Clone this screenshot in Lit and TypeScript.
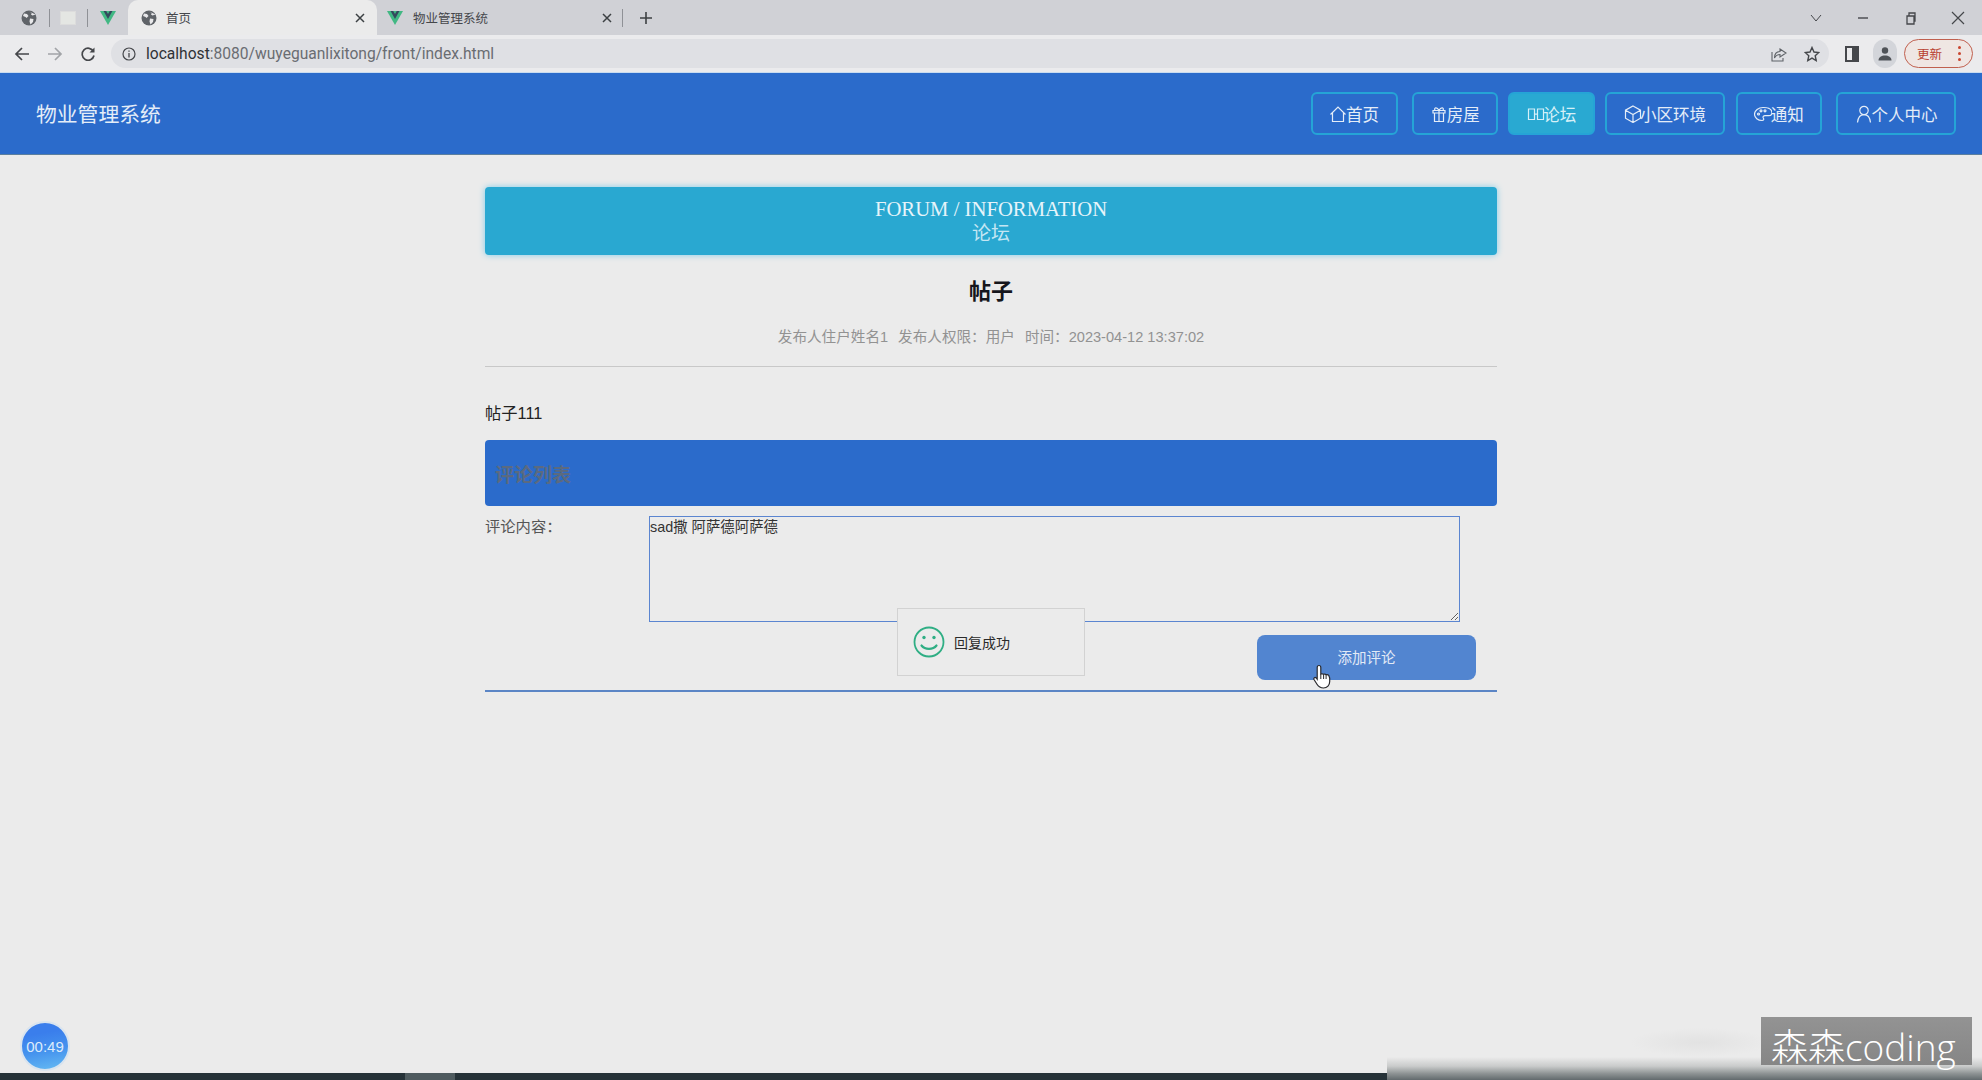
import { LitElement, html, css, svg } from 'lit';
import { customElement } from 'lit/decorators.js';

const globe = html`<svg class="ic16" viewBox="0 0 16 16"><circle cx="8" cy="8" r="7.5" fill="#5f6368"/><path d="M3 3.5l3 .5 1.5 2-2 2-1-1-2.5-1zM8 1.5l3 1-1 2 1.5 1 3-1M9 8.5l3.5.5-.5 3-2.5 2.5-1-3z" fill="#e8e8ea"/></svg>`;
const vue = html`<svg class="ic16" viewBox="0 0 18 16"><path d="M0 0h18L9 16z" fill="#41b883"/><path d="M4 0h3l2 3.5L11 0h3L9 9z" fill="#35495e"/></svg>`;
const close = html`<svg class="ic10" viewBox="0 0 10 10"><path d="M1 1l8 8M9 1l-8 8" stroke="#3c4043" stroke-width="1.5" fill="none"/></svg>`;

const navIcons = {
  home: svg`<path d="M1.500 9.500L9 2l7.500 7.500M3.500 8v8.500h11V8" />`,
  gift: svg`<path d="M4.500 8h9v8.500h-9zM3 5.500h12V8H3zM9 5.500v11M9 5.500C7 1.500 3.500 2.500 5 5.500M9 5.500c2-4 5.500-3 4 0" />`,
  chat: svg`<path d="M1.500 4h6v10.500h-6zM10.500 4h6v10.500h-6zM7.500 9.200h3" />`,
  cube: svg`<path d="M9 1l7.500 4.200v8L9 17.500l-7.500-4.300v-8zM1.500 5.200L9 9.500l7.500-4.300M9 9.500v8" />`,
  palette: svg`<path d="M9 2.500C4.500 2.500.5 5.500.5 9.200s3.500 6.300 7.500 6.300c2 0 2-1.500 1.300-2.500-.7-1.200.2-2.300 1.700-2.300h3.500c2 0 3.500-1 3.500-2.700 0-3.500-3.500-5.500-8.500-5.500z" /><circle cx="4.500" cy="9" r="1" /><circle cx="7" cy="5.800" r="1" /><circle cx="11" cy="5.800" r="1" />`,
  user: svg`<circle cx="9" cy="5.500" r="4.200" /><path d="M2.500 17.500C3 13 5.500 9.700 9 9.700s6 3.300 6.500 7.800" />`,
};

const navItems: { label: string; icon: keyof typeof navIcons; active?: boolean }[] = [
  { label: '首页', icon: 'home' },
  { label: '房屋', icon: 'gift' },
  { label: '论坛', icon: 'chat', active: true },
  { label: '小区环境', icon: 'cube' },
  { label: '通知', icon: 'palette' },
  { label: '个人中心', icon: 'user' },
];

@customElement('app-root')
export class AppRoot extends LitElement {
  static styles = css`
    :host {
      display: block;
      font-family: "Liberation Sans", "Noto Sans CJK SC", sans-serif;
    }
    .page {
      position: relative;
      width: 1982px;
      height: 1080px;
      overflow: hidden;
      background: #ebebeb;
      display: flex;
      flex-direction: column;
    }
    svg { display: block; flex: none; }
    .ic16 { width: 16px; height: 16px; }
    .ic10 { width: 10px; height: 10px; }

    /* browser frame */
    .tabstrip {
      height: 35px;
      background: #d0d1d6;
      display: flex;
      align-items: stretch;
      flex: none;
    }
    .pinned {
      width: 128px;
      display: flex;
      align-items: center;
      padding-left: 21px;
      box-sizing: border-box;
    }
    .sep { width: 1px; height: 18px; background: #8f9196; flex: none; align-self: center; }
    .pinned .sep.a { margin: 0 10px 0 12px; }
    .pinned .sep.b { margin: 0 12px 0 11px; }
    .fav { width: 16px; height: 14px; background: #e4e6e3; border: 1px solid #dcdcdc; box-sizing: border-box; }
    .tab {
      width: 249px;
      display: flex;
      align-items: center;
      box-sizing: border-box;
      font-size: 12.500px;
      color: #45474b;
    }
    .tab.active {
      background: #ebebeb;
      border-radius: 10px 10px 0 0;
      padding: 0 12px 0 13px;
      gap: 9px;
    }
    .tab.next { padding: 0 10px 0 10px; gap: 10px; width: 245px; }
    .tab span { flex: 1; }
    .plus { margin-left: 16px; align-self: center; width: 14px; height: 14px; }
    .winctl {
      margin-left: auto;
      display: flex;
      align-items: center;
      padding-right: 17px;
    }
    .winctl svg { width: 14px; height: 14px; margin-left: 33px; }
    .winctl svg:nth-child(3) { margin-left: 34px; }

    .toolbar {
      height: 37px;
      background: #ebebed;
      border-bottom: 1px solid #c9dcf0;
      display: flex;
      align-items: center;
      padding: 0 9px 0 14px;
      flex: none;
    }
    .toolbar .nav { width: 16px; height: 16px; margin-right: 17px; }
    .omnibox {
      margin-left: -2px;
      width: 1719px;
      height: 29px;
      border-radius: 15px;
      background: #dfe0e4;
      display: flex;
      align-items: center;
      padding: 0 9px 0 11px;
      box-sizing: border-box;
      font-family: "Roboto", sans-serif;
      font-size: 15.600px;
      color: #6a6d72;
    }
    .omnibox .info { width: 14px; height: 14px; margin-right: 10px; }
    .omnibox b { font-weight: 400; color: #2f3236; }
    .omni-right { margin-left: auto; display: flex; gap: 17px; align-items: center; }
    .panel { width: 14px; height: 16px; margin-left: 16px; }
    .avatar {
      width: 24px;
      height: 29px;
      margin-left: 14px;
      border-radius: 12px;
      background: #d3d5da;
      display: flex;
      align-items: center;
      justify-content: center;
    }
    .update {
      margin-left: 7px;
      width: 69px;
      height: 29px;
      box-sizing: border-box;
      border: 1px solid #c0604f;
      border-radius: 15px;
      display: flex;
      align-items: center;
      justify-content: space-between;
      padding: 0 11px 0 12px;
      color: #b8402f;
      font-size: 12.500px;
      background: #efe6e3;
    }
    .dots { display: flex; flex-direction: column; gap: 3px; }
    .dots i { width: 3px; height: 3px; border-radius: 50%; background: #c9452f; }

    /* site nav */
    .site-nav {
      height: 82px;
      flex: none;
      background: #2b6bcb;
      border-bottom: 1px solid #5b7f9e;
      box-sizing: border-box;
      display: flex;
      align-items: center;
      padding: 0 26px 0 36px;
      color: #e4edf8;
    }
    .brand { font-size: 20.800px; padding-bottom: 2px; }
    .menu { margin-left: auto; display: flex; align-items: center; }
    .menu-item {
      height: 43px;
      box-sizing: border-box;
      border: 2px solid #25a4d6;
      border-radius: 6px;
      padding: 0 16.600px;
      display: flex;
      align-items: center;
      font-size: 16.500px;
      color: #e4edf8;
    }
    .menu-item svg {
      width: 18px;
      height: 18px;
      fill: none;
      stroke: currentColor;
      stroke-width: 1.200;
      margin-right: -1.500px;
    }
    .menu-item.active { background: #29a9d2; color: #d5f0f8; }
    .menu-item:nth-child(2) { margin-left: 14px; }
    .menu-item:nth-child(3),
    .menu-item:nth-child(4) { margin-left: 10px; }
    .menu-item:nth-child(5) { margin-left: 11px; }
    .menu-item:nth-child(6) { margin-left: 14px; }

    /* content */
    .main { width: 1012px; margin: 0 auto; padding-top: 32px; }
    .banner {
      height: 68px;
      box-sizing: border-box;
      padding-top: 10px;
      border-radius: 4px;
      background: #29a8d1;
      box-shadow: 0 0 6px #7fcbe8;
      text-align: center;
      color: #e6f4fa;
      font-family: "Liberation Serif", "Noto Sans CJK SC", serif;
      font-size: 20.700px;
      line-height: 24px;
    }
    .banner .cn {
      color: #c4e6f3;
      font-family: "Noto Sans CJK SC", sans-serif;
      font-size: 19px;
      line-height: 21px;
    }
    .title {
      margin: 22px 0 0;
      height: 30px;
      line-height: 30px;
      font-size: 22px;
      font-weight: 700;
      text-align: center;
      color: #16161c;
    }
    .meta {
      margin-top: 20px;
      height: 20px;
      line-height: 20px;
      text-align: center;
      font-size: 14.600px;
      color: #929292;
      padding-bottom: 19px;
      border-bottom: 1px solid #c8c8c8;
    }
    .meta span + span { margin-left: 10px; }
    .body {
      margin-top: 34px;
      height: 24px;
      line-height: 24px;
      font-size: 16.300px;
      color: #222;
    }
    .bar {
      margin-top: 15px;
      height: 66px;
      border-radius: 4px;
      background: #2b6bcb;
      display: flex;
      align-items: center;
      padding-left: 10px;
      font-size: 19px;
      font-weight: 700;
      color: #5b6a80;
    }
    .form-row {
      margin-top: 10px;
      display: flex;
      align-items: flex-start;
    }
    .form-row label {
      width: 164px;
      flex: none;
      font-size: 15.300px;
      line-height: 21px;
      color: #555;
    }
    textarea {
      display: block;
      width: 811px;
      height: 106px;
      box-sizing: border-box;
      margin: 0;
      padding: 0;
      border: 1.500px solid #5b85d0;
      background: transparent;
      outline: none;
      font-family: inherit;
      font-size: 14.400px;
      line-height: 20px;
      color: #333;
    }
    .actions {
      margin-top: 13px;
      display: flex;
      justify-content: flex-end;
      padding: 0 21px 10px 0;
      border-bottom: 2px solid #5b85c5;
    }
    .add {
      width: 219px;
      height: 45px;
      border: 0;
      border-radius: 8px;
      background: #5285d0;
      color: #e2eaf6;
      font-family: inherit;
      font-size: 14.500px;
      padding: 0 0 2px;
    }

    /* overlays */
    .toast {
      position: absolute;
      left: 897px;
      top: 608px;
      width: 188px;
      height: 68px;
      box-sizing: border-box;
      border: 1px solid #d2d2d2;
      background: #ebebeb;
      display: flex;
      align-items: center;
      padding-left: 15px;
      gap: 9px;
      font-size: 14px;
      color: #2a2a2a;
    }
    .toast svg { width: 32px; height: 32px; }
    .cursor { position: absolute; left: 1313px; top: 664px; width: 19px; height: 25px; }
    .timer {
      position: absolute;
      left: 20px;
      top: 1021px;
      width: 50px;
      height: 50px;
      box-sizing: border-box;
      border: 2px solid #d9e4ef;
      border-radius: 50%;
      background: linear-gradient(170deg, #3a7eec 25%, #4593ee 60%, #62b6f2 95%);
      display: flex;
      align-items: center;
      justify-content: center;
      font-size: 15px;
      color: #dcebfb;
    }
    .strip {
      position: absolute;
      left: 0;
      bottom: 0;
      width: 1387px;
      height: 7px;
      background: #263238;
    }
    .strip i { position: absolute; left: 405px; top: 0; width: 50px; height: 7px; background: #4f5b5f; }
    .smudge {
      position: absolute;
      left: 1630px;
      top: 1028px;
      width: 140px;
      height: 29px;
      background: radial-gradient(closest-side, #e2e2e2, #ebebeb);
    }
    .fade {
      position: absolute;
      left: 1387px;
      right: 0;
      bottom: 0;
      height: 23px;
      background: linear-gradient(#ebebeb, #c9cbcb 40%, #8e9394 72%, #626a6d);
    }
    .watermark {
      position: absolute;
      left: 1761px;
      top: 1017px;
      width: 211px;
      height: 48px;
      background: linear-gradient(#939393, #868686);
      color: #fff;
      font-family: "Open Sans", "Noto Sans CJK SC", sans-serif;
      font-weight: 300;
      font-size: 37px;
      line-height: 48px;
      padding: 6px 0 0 10px;
      box-sizing: border-box;
      white-space: nowrap;
    }
  `;

  render() {
    return html`
      <div class="page">
        <div class="tabstrip">
          <div class="pinned">
            ${globe}<div class="sep a"></div><div class="fav"></div><div class="sep b"></div>${vue}
          </div>
          <div class="tab active">${globe}<span>首页</span>${close}</div>
          <div class="tab next">${vue}<span>物业管理系统</span>${close}</div>
          <div class="sep"></div>
          <svg class="plus" viewBox="0 0 14 14"><path d="M7 1v12M1 7h12" stroke="#3c4043" stroke-width="1.600" fill="none"/></svg>
          <div class="winctl">
            <svg viewBox="0 0 14 14"><path d="M2 4l5 6 5-6" stroke="#45474b" stroke-width="1" fill="none"/></svg>
            <svg viewBox="0 0 14 14"><path d="M2 7h10" stroke="#45474b" stroke-width="1.400" fill="none"/></svg>
            <svg viewBox="0 0 14 14"><path d="M3 5h7v8H3zM5 5V2h6v8h-1" stroke="#45474b" stroke-width="1.300" fill="none"/></svg>
            <svg viewBox="0 0 14 14"><path d="M1 1l12 12M13 1L1 13" stroke="#45474b" stroke-width="1.200" fill="none"/></svg>
          </div>
        </div>

        <div class="toolbar">
          <svg class="nav" viewBox="0 0 16 16"><path d="M15 8H2M8 2L2 8l6 6" stroke="#45474b" stroke-width="1.700" fill="none"/></svg>
          <svg class="nav" viewBox="0 0 16 16"><path d="M1 8h13M8 2l6 6-6 6" stroke="#a2a4a8" stroke-width="1.700" fill="none"/></svg>
          <svg class="nav" viewBox="0 0 16 16"><path d="M13.500 5.500A6 6 0 1 0 14 9.500" stroke="#45474b" stroke-width="1.700" fill="none"/><path d="M14.500 1.500v5h-5z" fill="#45474b"/></svg>
          <div class="omnibox">
            <svg class="info" viewBox="0 0 14 14"><circle cx="7" cy="7" r="6" stroke="#45474b" stroke-width="1.200" fill="none"/><path d="M7 6v4.500M7 3.500v1.300" stroke="#45474b" stroke-width="1.300"/></svg>
            <span><b>localhost</b>:8080/wuyeguanlixitong/front/index.html</span>
            <div class="omni-right">
              <svg class="ic16" viewBox="0 0 16 16"><path d="M9 3l6 4-6 4V8.500C6 8.500 4.500 10 3.500 12 3.500 8 5.500 5.500 9 5.500zM1 6v9h11v-3" stroke="#5f6368" stroke-width="1.100" fill="none"/></svg>
              <svg class="ic16" viewBox="0 0 16 16"><path d="M8 1.500l2 4.500 4.800.5-3.600 3.200 1 4.800L8 12.100l-4.200 2.400 1-4.800L1.200 6.500 6 6z" stroke="#45474b" stroke-width="1.400" fill="none"/></svg>
            </div>
          </div>
          <svg class="panel" viewBox="0 0 14 16"><path d="M0 0h14v16H0z" fill="#45474b"/><path d="M2 2h5v12H2z" fill="#ebebed"/></svg>
          <div class="avatar">
            <svg class="ic16" viewBox="0 0 16 16"><circle cx="8" cy="4.500" r="3.200" fill="#4f5358"/><path d="M1.500 14.500c0-3.500 3-5 6.500-5s6.500 1.500 6.500 5z" fill="#4f5358"/></svg>
          </div>
          <div class="update"><span>更新</span><div class="dots"><i></i><i></i><i></i></div></div>
        </div>

        <header class="site-nav">
          <div class="brand">物业管理系统</div>
          <nav class="menu">
            ${navItems.map(
              (item) => html`<div class="menu-item ${item.active ? 'active' : ''}">
                <svg viewBox="0 0 18 18">${navIcons[item.icon]}</svg>${item.label}
              </div>`
            )}
          </nav>
        </header>

        <main class="main">
          <div class="banner">
            <div>FORUM / INFORMATION</div>
            <div class="cn">论坛</div>
          </div>
          <h1 class="title">帖子</h1>
          <div class="meta">
            <span>发布人住户姓名1</span><span>发布人权限：用户</span><span>时间：2023-04-12 13:37:02</span>
          </div>
          <div class="body">帖子111</div>
          <div class="bar">评论列表</div>
          <div class="form-row">
            <label>评论内容：</label>
            <textarea .value=${'sad撒 阿萨德阿萨德'}></textarea>
          </div>
          <div class="actions"><button class="add">添加评论</button></div>
        </main>

        <div class="toast">
          <svg viewBox="0 0 32 32" fill="none" stroke="#2fae84" stroke-width="1.800">
            <circle cx="16" cy="16" r="14.500"/>
            <path d="M8.500 19.500c3.500 4.500 11.500 4.500 15 0" stroke-width="2.200" stroke-linecap="round"/>
            <circle cx="11" cy="11.500" r="1.700" fill="#2fae84" stroke="none"/>
            <circle cx="21" cy="11.500" r="1.700" fill="#2fae84" stroke="none"/>
          </svg>
          <span>回复成功</span>
        </div>
        <svg class="cursor" viewBox="0 0 19 25">
          <path d="M6 1.500c1.200 0 1.800.8 1.800 2V10c1.800-.4 2-.3 2.800.3 1-.4 1.800-.3 2.500.4 1-.3 2.100-.1 2.700.8l.9 2.500v3.500c0 3.500-2.500 6.500-6.200 6.500-3.200 0-5-1.300-6.500-3.700L1 15.500c-.7-1.500 1-2.700 2.200-1.500l1 1.300V3.500c0-1.200.6-2 1.800-2z" fill="#fff" stroke="#2a2a2e" stroke-width="1.200"/>
          <path d="M7.800 10v5M10.600 10.300V15M13.100 10.700V15" stroke="#2a2a2e" stroke-width="1" fill="none"/>
        </svg>
        <div class="timer">00:49</div>
        <div class="strip"><i></i></div>
        <div class="smudge"></div>
        <div class="fade"></div>
        <div class="watermark">森森coding</div>
      </div>
    `;
  }
}
